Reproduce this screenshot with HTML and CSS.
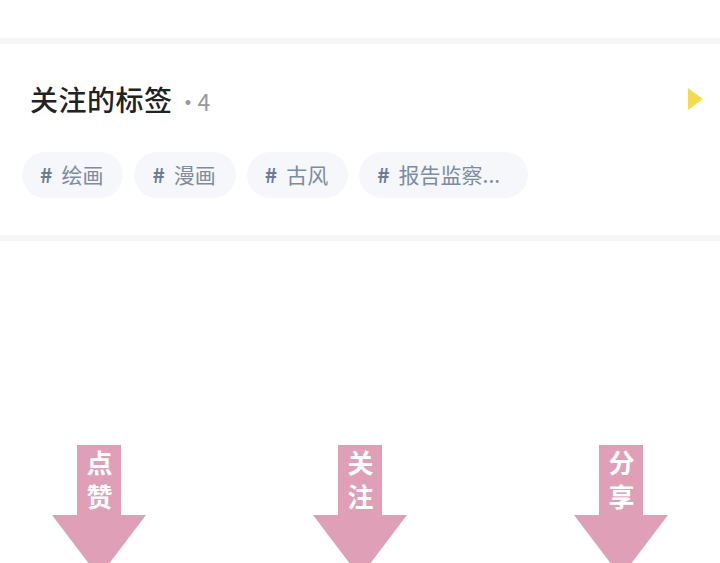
FILE: index.html
```html
<!DOCTYPE html>
<html lang="zh-CN">

<head>
	<meta charset="UTF-8">
	<meta name="viewport" content="width=device-width, initial-scale=1.0">
	<title>关注的标签</title>
	<link rel="stylesheet" href="styles.css">
</head>

<body>
	<div class="top-space"></div>
	<div class="divider"></div>

	<section class="tags-card">
		<div class="card-head">
			<h2 class="card-title">关注的标签<span class="count">·4</span></h2>
			<span class="more-arrow"></span>
		</div>
		<div class="tag-list">
			<span class="tag"><b>#</b>绘画</span>
			<span class="tag"><b>#</b>漫画</span>
			<span class="tag"><b>#</b>古风</span>
			<span class="tag tag-long"><b>#</b>报告监察...</span>
		</div>
	</section>

	<div class="divider"></div>

	<div class="hint-row">
		<div class="hint">
			<svg class="hint-arrow" viewBox="0 0 94 132" width="94" height="132">
				<path d="M25 0 H69 V70 H94 L47 132 L0 70 H25 Z" />
			</svg>
			<span class="hint-text">点赞</span>
		</div>
		<div class="hint">
			<svg class="hint-arrow" viewBox="0 0 94 132" width="94" height="132">
				<path d="M25 0 H69 V70 H94 L47 132 L0 70 H25 Z" />
			</svg>
			<span class="hint-text">关注</span>
		</div>
		<div class="hint">
			<svg class="hint-arrow" viewBox="0 0 94 132" width="94" height="132">
				<path d="M25 0 H69 V70 H94 L47 132 L0 70 H25 Z" />
			</svg>
			<span class="hint-text">分享</span>
		</div>
	</div>
</body>

</html>
```

FILE: styles.css
```css
* {
	margin: 0;
	padding: 0;
	box-sizing: border-box;
	font-family: "Noto Sans CJK SC", "Noto Sans", sans-serif;
}

body {
	width: 720px;
	height: 563px;
	overflow: hidden;
	background-color: #fff;
}

.top-space {
	height: 38px;
}

.divider {
	height: 6px;
	background-color: #f6f6f6;
}

/* followed tags card */
.tags-card {
	height: 191px;
	padding: 0 17px 0 22px;
}

.card-head {
	height: 108px;
	display: flex;
	justify-content: space-between;
	align-items: center;
	padding: 2px 0 0 8px;
}

.card-title {
	font-size: 28px;
	font-weight: 500;
	color: #222;
	letter-spacing: 0.5px;
}

.card-title .count {
	font-size: 23px;
	font-weight: 400;
	color: #9a9a9a;
	margin-left: 4px;
	letter-spacing: -2px;
}

.more-arrow {
	width: 0;
	height: 0;
	border-top: 11px solid transparent;
	border-bottom: 11px solid transparent;
	border-left: 15px solid #f2dc4c;
}

.tag-list {
	display: flex;
	gap: 11px;
}

.tag {
	height: 46px;
	line-height: 44px;
	padding: 0 20px 0 18px;
	border-radius: 23px;
	background-color: #f5f7fa;
	font-size: 21px;
	color: #7d8ba3;
}

.tag b {
	color: #6c7c97;
	margin-right: 9px;
}

.tag-long {
	padding-right: 28px;
}

/* hint arrows */
.hint-row {
	display: flex;
	justify-content: center;
	gap: 167px;
	padding-top: 204px;
}

.hint {
	position: relative;
	width: 94px;
	height: 132px;
}

.hint-arrow {
	display: block;
	fill: #de9fb7;
}

.hint-text {
	position: absolute;
	top: 5px;
	left: 34px;
	writing-mode: vertical-rl;
	color: #fff;
	font-size: 26px;
	font-weight: 700;
	line-height: 26px;
	letter-spacing: 8px;
}
```
